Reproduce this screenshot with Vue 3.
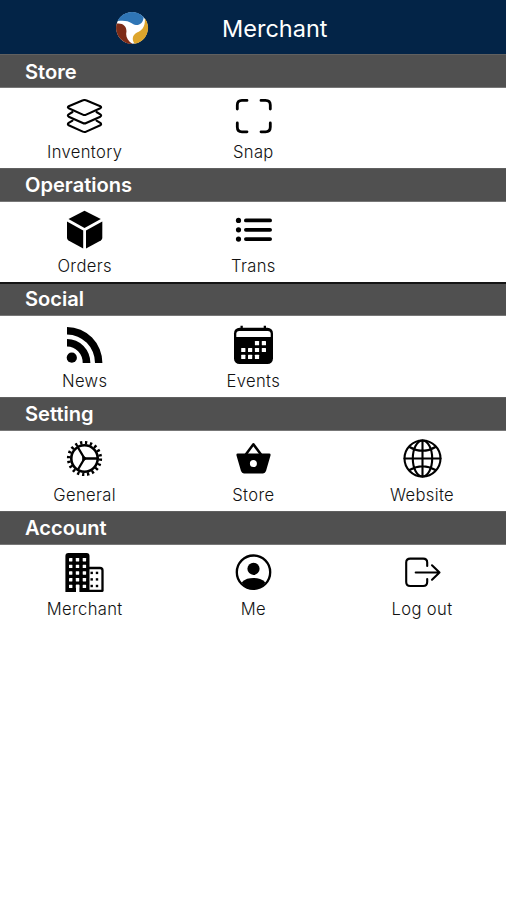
<template>
  <div class="merchant-page">
    <header class="header">
      <svg class="logo" viewBox="0 0 34 34">
        <circle cx="17" cy="17" r="15.8" fill="#fff" />
        <path d="M2.6 10 A16 16 0 0 1 28.6 5.9 C28.6 11 25 14.3 21 14 C16.5 13.5 15 8.2 2.6 10Z" fill="#2f75b5" />
        <path d="M29.8 7.3 A16 16 0 0 1 19.6 32.8 C16.4 28.5 17.5 23.8 22 21.6 C27.5 19.2 30.5 15 29.8 7.3Z" fill="#dda52c" />
        <path d="M1.7 12.6 A16 16 0 0 0 17.5 33 C12.5 29.5 10.7 26 11.3 21.8 C12.3 16 8.5 11.6 1.7 12.6Z" fill="#7d2c17" />
      </svg>
      <h1 class="title">Merchant</h1>
    </header>

    <section v-for="section in sections" :key="section.title" class="section" :class="{ social: section.dark }">
      <h2 class="section-title">{{ section.title }}</h2>
      <div class="items">
        <div v-for="item in section.items" :key="item.icon" class="item">
          <svg class="icon" viewBox="0 0 40 40">
            <g v-if="item.icon === 'layers'" class="line thin">
              <path d="M19 4.3 L4.7 10.2 Q3 11.2 4.7 12.2 L18.8 18.6 Q20.5 19.4 22.2 18.6 L36.3 12.2 Q38 11.2 36.3 10.2 L22 4.3 Q20.5 3.6 19 4.3Z" />
              <path d="M8.5 16 L4.7 18.3 Q3 19.6 4.7 20.7 L18.8 27 Q20.5 27.8 22.2 27 L36.3 20.7 Q38 19.6 36.3 18.3 L32.5 16" />
              <path d="M8.5 24.6 L4.7 26.9 Q3 28.2 4.7 29.3 L18.8 35.6 Q20.5 36.4 22.2 35.6 L36.3 29.3 Q38 28.2 36.3 26.9 L32.5 24.6" />
            </g>
            <g v-else-if="item.icon === 'scan'" class="line thick">
              <path d="M4.3 13 V9 Q4.3 4.4 9 4.4 H14 M28 4.4 H32.5 Q37.3 4.4 37.3 9 V13 M37.3 27 V31 Q37.3 35.8 32.5 35.8 H28 M14 35.8 H9 Q4.3 35.8 4.3 31 V27" />
            </g>
            <g v-else-if="item.icon === 'cube'">
              <path d="M20.5 .7 L36.8 9.1 L20.5 18 L4.5 9.1Z" />
              <path d="M3 11.5 L19.2 20.5 V38.6 L4.5 30.4 Q3 29.5 3 28Z" />
              <path d="M38.3 11.5 L22 20.5 V38.6 L36.8 30.4 Q38.3 29.5 38.3 28Z" />
            </g>
            <g v-else-if="item.icon === 'list'">
              <g v-for="y in [10.4, 19.8, 29.1]" :key="y">
                <circle cx="5.5" :cy="y" r="2.6" />
                <rect x="11" :y="y - 1.9" width="28" height="3.8" rx="1.9" />
              </g>
            </g>
            <g v-else-if="item.icon === 'rss'">
              <circle cx="7.8" cy="32.7" r="5.1" />
              <path d="M3 2 A35.4 36 0 0 1 38.4 38 H31 A28 28.5 0 0 0 3 9.5Z" />
              <path d="M3 14 A23.4 24 0 0 1 26.4 38 H18.7 A15.7 16.5 0 0 0 3 21.5Z" />
            </g>
            <g v-else-if="item.icon === 'calendar'">
              <path d="M7.5 .8 H9.8 V4 H7.5Z M30.7 .8 H33 V4 H30.7Z" />
              <rect x="1" y="2.7" width="39" height="36.3" rx="5.5" />
              <path d="M3.3 12 V8.8 Q3.3 5.9 6.3 5.9 H34.7 Q37.7 5.9 37.7 8.8 V12Z" fill="#fff" />
              <rect v-for="[x, y] in days" :key="`${x}-${y}`" :x="x" :y="y" width="4.2" height="4.2" rx=".5" fill="#fff" />
            </g>
            <g v-else-if="item.icon === 'gear'" class="line">
              <circle cx="20.5" cy="19.5" r="13.2" stroke-width="2.6" />
              <circle cx="20.5" cy="19.5" r="15.9" stroke-width="3.4" stroke-dasharray="2.3 2.695" stroke-linecap="butt" />
              <path d="M33 19.5 H20.5 L14 8.5 M20.5 19.5 L14 30.5" stroke-width="2.3" />
              <path d="M19 17 L22.5 19.5 L19 22Z" fill="#000" stroke-width="1" />
            </g>
            <g v-else-if="item.icon === 'basket'">
              <path class="line" d="M12.8 15.5 L20.4 5.3 L28 15.5" stroke-width="2.5" />
              <path fill-rule="evenodd" d="M4.8 14.5 H36.2 Q38 14.5 37.5 16.4 L33 32 Q32.2 34.4 30 34.4 H11 Q8.8 34.4 8 32 L3.5 16.4 Q3 14.5 4.8 14.5Z M20.4 21.1 A3.5 3.5 0 1 0 20.4 28.1 A3.5 3.5 0 1 0 20.4 21.1Z" />
            </g>
            <g v-else-if="item.icon === 'globe'" class="line thin">
              <circle cx="20.5" cy="19.5" r="18" />
              <ellipse cx="20.5" cy="19.5" rx="9.7" ry="18" />
              <path d="M20.5 1.5 V37.5 M2.5 19.5 H38.5 M7.5 8 Q20.5 15.6 33.5 8 M7.5 31 Q20.5 23.4 33.5 31" />
            </g>
            <g v-else-if="item.icon === 'building'">
              <path d="M4.3 0 H22.7 Q25.5 0 25.5 3 V39 H15.4 V31.8 H12 V39 H1.4 V3 Q1.4 0 4.3 0Z" />
              <path class="line" d="M25 15 H36 Q38.5 15 38.5 17.5 V37.8 H25" stroke-width="2.3" />
              <template v-for="y in [5, 11.7, 18.3, 25, 31.7]" :key="y">
                <rect v-for="x in [5, 11.8, 18.7]" :key="x" :x="x" :y="y" width="3.4" height="3.4" rx=".4" fill="#fff" />
              </template>
              <template v-for="y in [18.7, 25.2, 31.8]" :key="y">
                <rect x="26.5" :y="y" width="2.4" height="2.4" />
                <rect x="31.8" :y="y" width="2.4" height="2.4" />
              </template>
            </g>
            <g v-else-if="item.icon === 'person'">
              <circle class="line" cx="20.5" cy="19.2" r="16.7" stroke-width="2.3" />
              <circle cx="20.5" cy="15.8" r="6.1" />
              <path d="M8.8 29.2 C12 25.8 16 24.9 20.5 24.9 C25 24.9 29 25.8 32.2 29.2 C29.5 34 25 36.4 20.5 36.4 C16 36.4 11.5 34 8.8 29.2Z" />
            </g>
            <g v-else class="line thin">
              <path d="M25.2 13 V9.5 Q25.2 5.6 21.2 5.6 H8.2 Q4.2 5.6 4.2 9.5 V29 Q4.2 33 8.2 33 H21.2 Q25.2 33 25.2 29 V26" />
              <path d="M13.7 19.5 H37.5 M30 12.3 L37.5 19.5 L30 26.7" />
            </g>
          </svg>
          <span class="label">{{ item.label }}</span>
        </div>
      </div>
    </section>
  </div>
</template>

<script setup>
const sections = [
  {
    title: 'Store',
    items: [
      { label: 'Inventory', icon: 'layers' },
      { label: 'Snap', icon: 'scan' }
    ]
  },
  {
    title: 'Operations',
    items: [
      { label: 'Orders', icon: 'cube' },
      { label: 'Trans', icon: 'list' }
    ]
  },
  {
    title: 'Social',
    dark: true,
    items: [
      { label: 'News', icon: 'rss' },
      { label: 'Events', icon: 'calendar' }
    ]
  },
  {
    title: 'Setting',
    items: [
      { label: 'General', icon: 'gear' },
      { label: 'Store', icon: 'basket' },
      { label: 'Website', icon: 'globe' }
    ]
  },
  {
    title: 'Account',
    items: [
      { label: 'Merchant', icon: 'building' },
      { label: 'Me', icon: 'person' },
      { label: 'Log out', icon: 'logout' }
    ]
  }
]

// calendar day cells
const days = [
  [21.9, 16], [28.8, 16],
  [8.2, 22.9], [15, 22.9], [21.9, 22.9], [28.8, 22.9],
  [8.2, 29.7], [15, 29.7], [21.9, 29.7]
]
</script>

<style>
body {
  background: #fff;
}
</style>

<style scoped>
.merchant-page {
  min-height: 900px;
  background: #fff;
  font-family: Inter, "Liberation Sans", sans-serif;
  color: #000;
}

/* top bar */
.header {
  display: flex;
  align-items: center;
  box-sizing: border-box;
  height: 54px;
  padding-left: 115px;
  gap: 73px;
  background: #032447;
}

.logo {
  width: 34px;
  height: 34px;
  margin-top: 2px;
}

.title {
  margin: 4px 0 0;
  font-size: 23.5px;
  font-weight: 400;
  line-height: 30px;
  color: #fff;
}

.section {
  height: 114px;
}

.section-title {
  box-sizing: border-box;
  height: 34px;
  margin: 0;
  padding-left: 25px;
  border-top: 1px solid #606060;
  border-bottom: 1px solid #777;
  background: #505050;
  color: #fff;
  font-size: 20.1px;
  font-weight: 600;
  line-height: 32px;
}

.section:first-of-type .section-title {
  line-height: 34px;
}

/* darker divider above this block */
.social {
  height: 115px;
}

.social .section-title {
  border-top: 2px solid #151515;
  line-height: 31px;
}

.social .items {
  padding-top: 0.5px;
}

.items {
  display: grid;
  grid-template-columns: repeat(3, 1fr);
}

.item {
  display: flex;
  flex-direction: column;
  align-items: center;
  padding-top: 8px;
}

.icon {
  display: block;
  width: 40px;
  height: 40px;
}

.line {
  fill: none;
  stroke: #000;
  stroke-linecap: round;
  stroke-linejoin: round;
}

.thin {
  stroke-width: 2.1;
}

.thick {
  stroke-width: 2.8;
}

.label {
  margin-top: 5px;
  padding-left: 0.7px;
  font-size: 16.6px;
  font-weight: 300;
  line-height: 22px;
  letter-spacing: 0.35px;
  color: #111;
}
</style>
